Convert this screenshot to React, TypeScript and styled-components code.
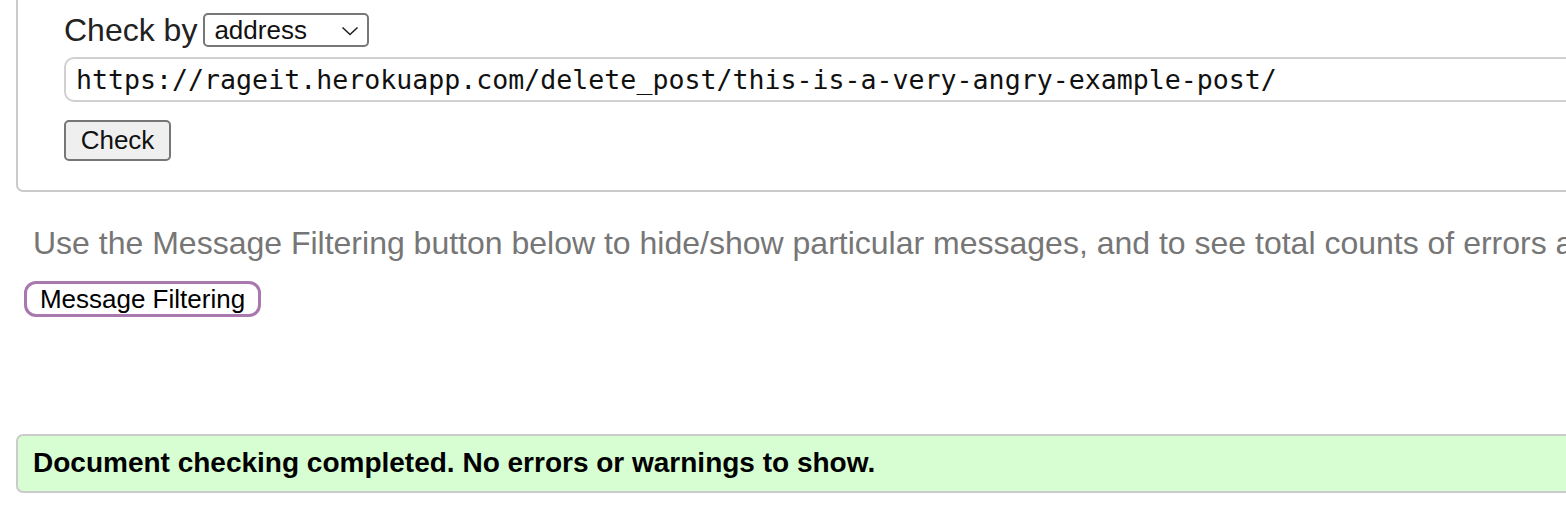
import React, { useState } from 'react';
import styled, { createGlobalStyle } from 'styled-components';

const GlobalStyle = createGlobalStyle`
    html, body {
        margin: 0;
        padding: 0;
        background: #ffffff;
        overflow: hidden;
    }
    body {
        font-family: "Liberation Sans", Arial, sans-serif;
        color: #222222;
    }
`;

const checkModes = ['address', 'file upload', 'text input'];

const App: React.FC = () => {
    const [mode, setMode] = useState<string>('address');
    const [url, setUrl] = useState<string>(
        'https://rageit.herokuapp.com/delete_post/this-is-a-very-angry-example-post/'
    );

    return (
        <>
            <GlobalStyle />
            <StyledPage>
                <StyledCheckPanel>
                    <StyledCheckByRow>
                        <StyledLabel>Check by</StyledLabel>
                        <StyledSelectWrap>
                            <StyledSelect value={mode} onChange={(e) => setMode(e.target.value)}>
                                {checkModes.map((m) => (
                                    <option key={m} value={m}>{m}</option>
                                ))}
                            </StyledSelect>
                            <StyledChevron width="18" height="10" viewBox="0 0 18 10">
                                <path d="M1.5 1.5 L9 8.5 L16.5 1.5" fill="none" stroke="#222" strokeWidth="1.6" />
                            </StyledChevron>
                        </StyledSelectWrap>
                    </StyledCheckByRow>

                    <StyledUrlInput
                        type="text"
                        value={url}
                        onChange={(e) => setUrl(e.target.value)}
                    />

                    <StyledCheckButton type="button">Check</StyledCheckButton>
                </StyledCheckPanel>

                <StyledHint>
                    Use the Message Filtering button below to hide/show particular messages, and to see total counts of errors and warnings.
                </StyledHint>

                <StyledFilterButton type="button">Message Filtering</StyledFilterButton>

                <StyledSuccess>
                    Document checking completed. No errors or warnings to show.
                </StyledSuccess>
            </StyledPage>
        </>
    );
};

const StyledPage = styled.div`
    width: 1700px;
    padding-left: 16px;
    display: flex;
    flex-direction: column;
    align-items: flex-start;
`

const StyledCheckPanel = styled.div`
    box-sizing: border-box;
    width: 100%;
    border: 2px solid #cbcbcb;
    border-top: none;
    border-radius: 0 0 7px 7px;
    padding: 13px 0 29px 46px;
    display: flex;
    flex-direction: column;
    align-items: flex-start;
`

const StyledCheckByRow = styled.div`
    display: flex;
    align-items: center;
    height: 34px;
    gap: 6px;
`

const StyledLabel = styled.span`
    font-size: 32px;
    line-height: 34px;
    color: #222222;
`

const StyledSelectWrap = styled.div`
    position: relative;
    width: 166px;
    height: 34px;
`

const StyledSelect = styled.select`
    appearance: none;
    box-sizing: border-box;
    width: 100%;
    height: 100%;
    margin: 0;
    padding: 0 0 2px 9px;
    border: 2px solid #777777;
    border-radius: 5px;
    background: #ffffff;
    font-family: "Liberation Sans", Arial, sans-serif;
    font-size: 26px;
    color: #111111;
`

const StyledChevron = styled.svg`
    position: absolute;
    right: 10px;
    top: 13px;
    pointer-events: none;
`

const StyledUrlInput = styled.input`
    box-sizing: border-box;
    width: 1600px;
    height: 45px;
    margin: 10px 0 0 0;
    padding: 0 10px;
    border: 2px solid #d0d0d0;
    border-radius: 10px;
    background: #ffffff;
    font-family: "DejaVu Sans Mono", Menlo, monospace;
    font-size: 26.6px;
    color: #111111;
    outline: none;
`

const StyledCheckButton = styled.button`
    box-sizing: border-box;
    width: 107px;
    height: 41px;
    margin-top: 18px;
    padding: 0;
    border: 2px solid #767676;
    border-radius: 5px;
    background: #efefef;
    font-family: "Liberation Sans", Arial, sans-serif;
    font-size: 26px;
    color: #111111;
`

const StyledHint = styled.p`
    margin: 33px 0 0 17px;
    font-size: 32px;
    line-height: 37px;
    color: #767676;
    white-space: nowrap;
`

const StyledFilterButton = styled.button`
    box-sizing: border-box;
    width: 237px;
    height: 36px;
    margin: 19px 0 0 8px;
    padding: 0;
    border: 3px solid #a878ae;
    border-radius: 12px;
    background: #ffffff;
    font-family: "Liberation Sans", Arial, sans-serif;
    font-size: 26px;
    line-height: 30px;
    color: #000000;
`

const StyledSuccess = styled.div`
    box-sizing: border-box;
    width: 100%;
    height: 59px;
    margin-top: 117px;
    padding: 11px 15px 0 15px;
    border: 2px solid #cbcbcb;
    border-radius: 7px;
    background: #d7fdd3;
    font-size: 28px;
    line-height: 32px;
    font-weight: bold;
    color: #000000;
`

export default App;
